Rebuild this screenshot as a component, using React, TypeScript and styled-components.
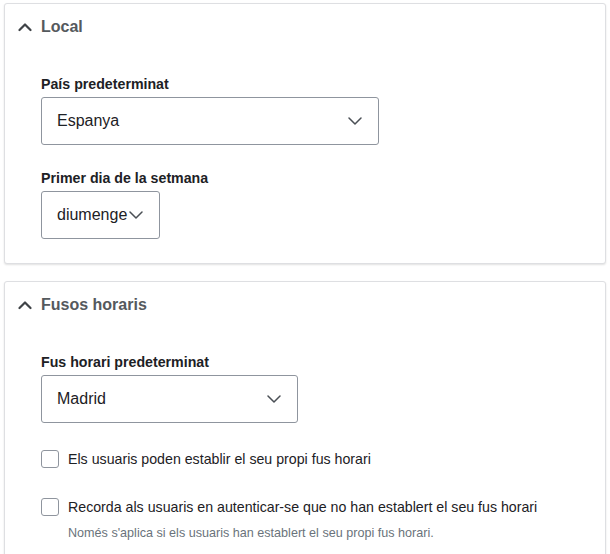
import React from "react";
import styled, { createGlobalStyle } from "styled-components";

const GlobalStyle = createGlobalStyle`
  html, body { margin: 0; padding: 0; background: #ffffff; }
  body { font-family: "Liberation Sans", Arial, sans-serif; color: #1d2125; }
`;

const Page = styled.div`
  display: flex;
  flex-direction: column;
  gap: 17px;
  padding: 3px 4px 0 4px;
`;

const Card = styled.section`
  border: 1px solid #dedfe2;
  border-radius: 3px;
  box-shadow: 0 1px 2px rgba(0, 0, 0, 0.12);
  background: #fff;
`;

const Header = styled.div`
  display: flex;
  align-items: center;
  gap: 9px;
  height: 46px;
  padding: 0 13px;
`;

const HeaderTitle = styled.h3`
  margin: 0;
  font-size: 16px;
  font-weight: 700;
  color: #55595d;
  line-height: 20px;
`;

const Body = styled.div`
  display: flex;
  flex-direction: column;
  padding: 24px 36px 24px;
`;

const Field = styled.div<{ $gap?: number }>`
  display: flex;
  flex-direction: column;
  align-items: flex-start;
  margin-top: ${(p) => p.$gap ?? 0}px;
`;

const Label = styled.label`
  font-size: 14.2px;
  font-weight: 700;
  line-height: 20px;
  color: #1d2125;
  margin-bottom: 3px;
`;

const SelectBox = styled.div<{ $w: number }>`
  box-sizing: border-box;
  width: ${(p) => p.$w}px;
  height: 48px;
  display: flex;
  align-items: center;
  justify-content: space-between;
  padding: 0 16px 0 15px;
  border: 1px solid #8f959e;
  border-radius: 3px;
  font-size: 16px;
  color: #1d2125;
  background: #fff;
`;

const CheckRow = styled.div<{ $gap: number }>`
  display: flex;
  align-items: center;
  gap: 9px;
  height: 24px;
  margin-top: ${(p) => p.$gap}px;
  font-size: 14.2px;
  color: #1d2125;
`;

const Box = styled.span`
  box-sizing: border-box;
  width: 18px;
  height: 18px;
  border: 1px solid #8f959e;
  border-radius: 3px;
  background: #fff;
  flex: none;
`;

const Hint = styled.div`
  margin: 5px 0 0 27px;
  font-size: 12.6px;
  line-height: 18px;
  color: #6a737b;
`;

const ChevronUp = () => (
  <svg width="14" height="14" viewBox="0 0 14 14" fill="none">
    <path d="M1.5 10 L7 4.5 L12.5 10" stroke="#3f4347" strokeWidth="2.2" strokeLinecap="round" strokeLinejoin="round" />
  </svg>
);

const ChevronDown = () => (
  <svg width="14" height="8" viewBox="0 0 14 8" fill="none">
    <path d="M1 1 L7 7 L13 1" stroke="#4a4f55" strokeWidth="1.5" strokeLinecap="round" strokeLinejoin="round" />
  </svg>
);

const Select = ({ value, width }: { value: string; width: number }) => (
  <SelectBox $w={width} role="combobox">
    <span>{value}</span>
    <ChevronDown />
  </SelectBox>
);

export default function App() {
  return (
    <>
      <GlobalStyle />
      <Page>
        <Card>
          <Header>
            <ChevronUp />
            <HeaderTitle>Local</HeaderTitle>
          </Header>
          <Body>
            <Field>
              <Label>País predeterminat</Label>
              <Select value="Espanya" width={338} />
            </Field>
            <Field $gap={23}>
              <Label>Primer dia de la setmana</Label>
              <Select value="diumenge" width={119} />
            </Field>
          </Body>
        </Card>
        <Card>
          <Header>
            <ChevronUp />
            <HeaderTitle>Fusos horaris</HeaderTitle>
          </Header>
          <Body>
            <Field>
              <Label>Fus horari predeterminat</Label>
              <Select value="Madrid" width={257} />
            </Field>
            <CheckRow $gap={24}>
              <Box />
              <span>Els usuaris poden establir el seu propi fus horari</span>
            </CheckRow>
            <CheckRow $gap={24}>
              <Box />
              <span>Recorda als usuaris en autenticar-se que no han establert el seu fus horari</span>
            </CheckRow>
            <Hint>Només s'aplica si els usuaris han establert el seu propi fus horari.</Hint>
          </Body>
        </Card>
      </Page>
    </>
  );
}
